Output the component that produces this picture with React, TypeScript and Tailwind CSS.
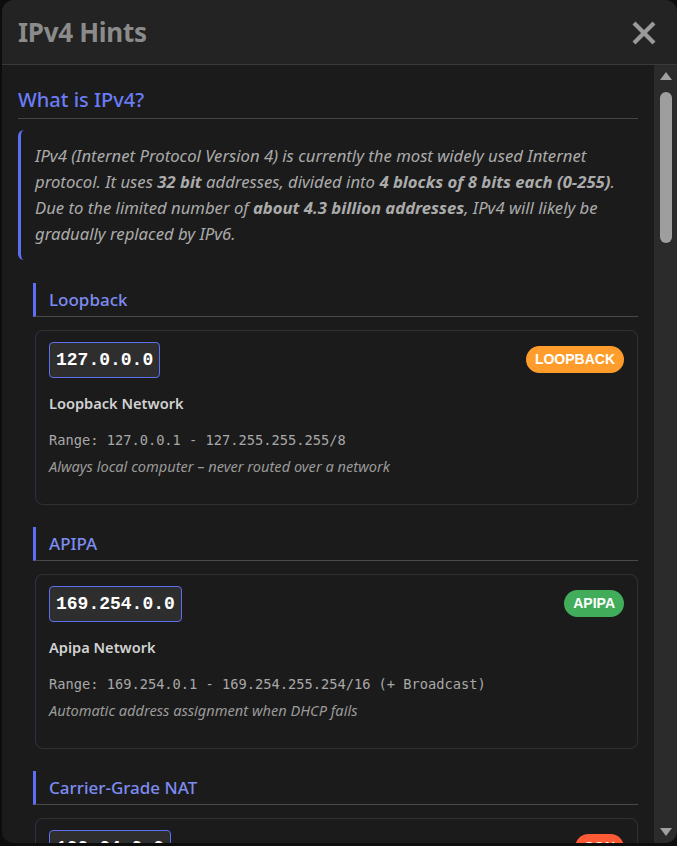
import React from "react";

const sans = { fontFamily: '"Noto Sans", "Open Sans", sans-serif' };
const mono = { fontFamily: '"Liberation Mono", "DejaVu Sans Mono", monospace' };
const mono2 = { fontFamily: '"DejaVu Sans Mono", "Liberation Mono", monospace' };

type Entry = {
  title: string;
  ip: string;
  badge: string;
  badgeClass: string;
  name: string;
  range: string;
  desc: string;
};

const entries: Entry[] = [
  {
    title: "Loopback",
    ip: "127.0.0.0",
    badge: "LOOPBACK",
    badgeClass: "bg-[#ff9d2c]",
    name: "Loopback Network",
    range: "Range: 127.0.0.1 - 127.255.255.255/8",
    desc: "Always local computer – never routed over a network",
  },
  {
    title: "APIPA",
    ip: "169.254.0.0",
    badge: "APIPA",
    badgeClass: "bg-[#41ad5b]",
    name: "Apipa Network",
    range: "Range: 169.254.0.1 - 169.254.255.254/16 (+ Broadcast)",
    desc: "Automatic address assignment when DHCP fails",
  },
  {
    title: "Carrier-Grade NAT",
    ip: "100.64.0.0",
    badge: "CGN",
    badgeClass: "bg-[#ff5a36]",
    name: "Carrier-Grade NAT Network",
    range: "Range: 100.64.0.1 - 100.127.255.254/10",
    desc: "Shared address space used by internet providers",
  },
];

function Section({ e, first }: { e: Entry; first: boolean }) {
  return (
    <div className={first ? "mt-[23px] ml-[15px]" : "mt-[22px] ml-[15px]"}>
      <div className="h-[34px] border-l-[3px] border-[#5b6ef5] border-b border-b-[#4a4a4a] pl-[13px] flex items-center">
        <span className="text-[17px] font-medium text-[#7d8cf2] leading-none" style={sans}>
          {e.title}
        </span>
      </div>
      <div className="mt-[13px] ml-[2px] h-[175px] rounded-[8px] border border-[#303030] border-l-[#2b3152] px-[13px] pt-[11px] flex flex-col">
        <div className="flex items-start justify-between">
          <div
            className="h-[36px] px-[6px] rounded-[4px] border border-[#5b6ef5] bg-[#2e2e2e] text-white text-[18px] font-bold flex items-center"
            style={mono}
          >
            {e.ip}
          </div>
          <div
            className={`mt-[4px] h-[27px] px-[9px] rounded-full ${e.badgeClass} text-white text-[14px] font-bold flex items-center`}
            style={{ fontFamily: '"Liberation Sans", Arial, sans-serif' }}
          >
            {e.badge}
          </div>
        </div>
        <div className="mt-[15px] text-[14.6px] font-semibold text-[#d2d2d2] leading-[20px]" style={sans}>
          {e.name}
        </div>
        <div className="mt-[17px] text-[13.7px] text-[#a8a8a8] leading-[20px]" style={mono2}>
          {e.range}
        </div>
        <div className="mt-[6px] text-[14.6px] italic text-[#9a9a9a] leading-[20px]" style={sans}>
          {e.desc}
        </div>
      </div>
    </div>
  );
}

export default function App() {
  return (
    <div className="w-[677px] h-[846px] bg-[#0d0d0d] pl-[2px] pb-[3px] overflow-hidden">
      <div className="h-[843px] w-[675px] rounded-[12px] overflow-hidden bg-[#1b1b1b] flex flex-col">
        <div className="h-[65px] shrink-0 bg-[#232323] border-b border-[#3a3a3a] flex items-center justify-between pl-[16px] pr-[20px]">
          <span className="text-[26px] font-bold text-[#8b8b8b] leading-none tracking-[-0.3px]" style={sans}>
            IPv4 Hints
          </span>
          <svg width="26" height="24" viewBox="0 0 26 24" className="mt-[1px]">
            <path d="M3 2 L23 22 M23 2 L3 22" stroke="#9a9a9a" strokeWidth="4.2" strokeLinecap="butt" />
          </svg>
        </div>
        <div className="flex flex-1 min-h-0">
          <div className="flex-1 min-w-0 overflow-hidden pl-[16px] pr-[16px]">
            <div className="h-[54px] flex items-end border-b border-[#444] pb-[8px]">
              <span className="text-[20px] font-medium text-[#6a7cf6] leading-none" style={sans}>
                What is IPv4?
              </span>
            </div>
            <div className="mt-[11px] border-l-[3px] border-[#5b6ef5] rounded-l-[6px] pl-[14px] pr-[8px] pt-[13px] pb-[13px]">
              <p className="text-[16.7px] italic text-[#ababab] leading-[26px]" style={sans}>
                IPv4 (Internet Protocol Version 4) is currently the most widely used Internet protocol. It uses{" "}
                <b className="font-bold">32 bit</b> addresses, divided into{" "}
                <b className="font-bold">4 blocks of 8 bits each (0-255)</b>. Due to the limited number of{" "}
                <b className="font-bold">about 4.3 billion addresses</b>, IPv4 will likely be gradually replaced by IPv6.
              </p>
            </div>
            {entries.map((e, i) => (
              <Section key={e.title} e={e} first={i === 0} />
            ))}
          </div>
          <div className="w-[23px] shrink-0 bg-[#2b2b2b] flex flex-col items-center pt-[7px] pb-[7px]">
            <svg width="12" height="8" viewBox="0 0 12 8">
              <path d="M6 0 L12 8 L0 8 Z" fill="#a0a0a0" />
            </svg>
            <div className="mt-[12px] w-[12px] h-[151px] rounded-full bg-[#9e9e9e]" />
            <div className="flex-1" />
            <svg width="12" height="8" viewBox="0 0 12 8">
              <path d="M0 0 L12 0 L6 8 Z" fill="#a0a0a0" />
            </svg>
          </div>
        </div>
      </div>
    </div>
  );
}
